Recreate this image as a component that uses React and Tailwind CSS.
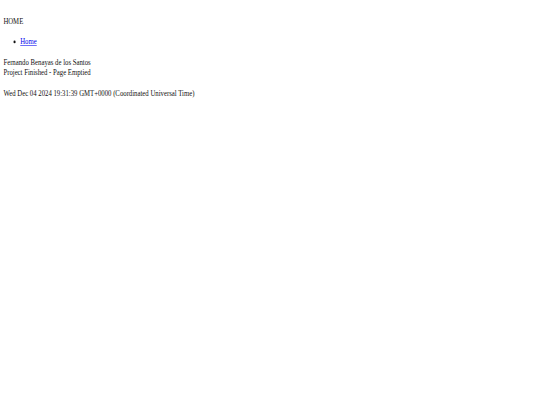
export default function App() {
  return (
    <div className="h-[405px] w-[540px] overflow-hidden bg-white">
      <div
        className="h-[720px] w-[1280px] origin-top-left scale-x-[0.421875] scale-y-[0.5625] px-2 pt-[28px] text-[16px] leading-[18.4px] text-[#111]"
        style={{ fontFamily: '"Liberation Serif", "Times New Roman", serif' }}
      >
        <header>
          <p>HOME</p>
          <nav className="mt-[19px]">
            <ul className="list-disc pl-10">
              <li>
                <a href="#" className="text-[#0000ee] underline">
                  Home
                </a>
              </li>
            </ul>
          </nav>
        </header>
        <main />
        <footer className="mt-[18px]">
          <p>
            Fernando Benayas de los Santos
            <br />
            Project Finished - Page Emptied
          </p>
          <p className="mt-[17px]">Wed Dec 04 2024 19:31:39 GMT+0000 (Coordinated Universal Time)</p>
        </footer>
      </div>
    </div>
  );
}
